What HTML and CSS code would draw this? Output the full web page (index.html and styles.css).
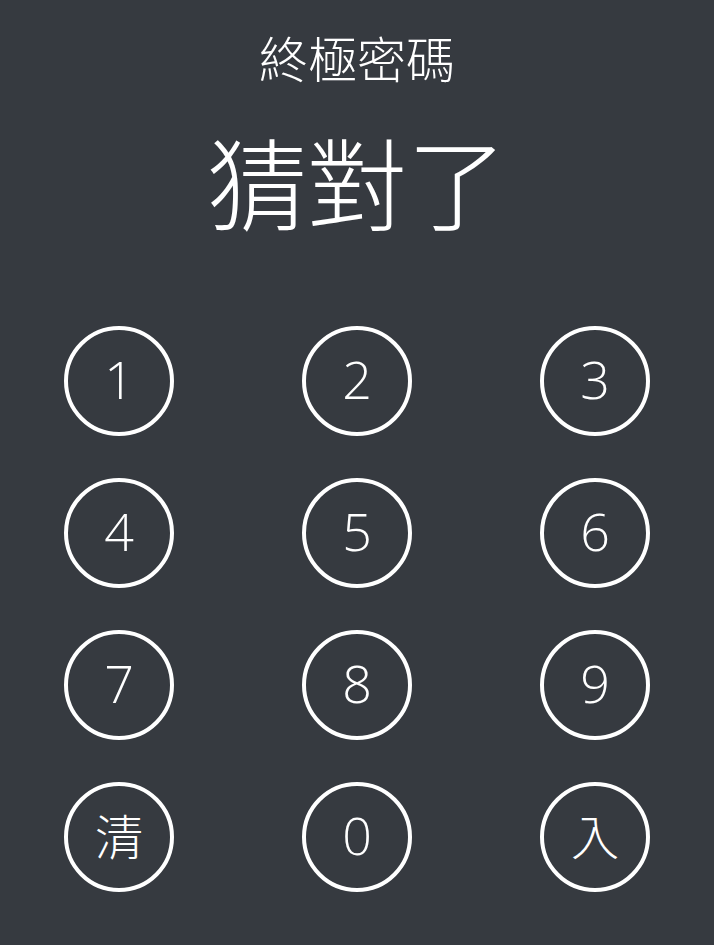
FILE: index.html
```html
<!DOCTYPE html>
<html lang="zh-Hant">
<head>
<meta charset="utf-8">
<title>終極密碼</title>
<link rel="stylesheet" href="styles.css">
</head>
<body>
<main class="app">
  <h1 class="title">終極密碼</h1>
  <div class="result">猜對了</div>
  <div class="keypad">
    <div class="cell"><button class="key">1</button></div>
    <div class="cell"><button class="key">2</button></div>
    <div class="cell"><button class="key">3</button></div>
    <div class="cell"><button class="key">4</button></div>
    <div class="cell"><button class="key">5</button></div>
    <div class="cell"><button class="key">6</button></div>
    <div class="cell"><button class="key">7</button></div>
    <div class="cell"><button class="key">8</button></div>
    <div class="cell"><button class="key">9</button></div>
    <div class="cell"><button class="key key-cjk">清</button></div>
    <div class="cell"><button class="key">0</button></div>
    <div class="cell"><button class="key key-cjk">入</button></div>
  </div>
</main>
</body>
</html>
```

FILE: styles.css
```css
html, body {
  margin: 0;
  padding: 0;
  background: #363a40;
}
body {
  font-family: "Noto Sans CJK TC", "Noto Sans", sans-serif;
  color: #ffffff;
}
.app {
  width: 714px;
  height: 945px;
  display: flex;
  flex-direction: column;
  align-items: center;
}
.title {
  margin: 28px 0 0;
  font-size: 49px;
  line-height: 58px;
  font-weight: 300;
}
.result {
  margin-top: 34px;
  font-size: 100px;
  line-height: 120px;
  font-weight: 300;
}
.keypad {
  margin-top: 65px;
  width: 714px;
  display: grid;
  grid-template-columns: repeat(3, 1fr);
  grid-auto-rows: 152px;
}
.cell {
  display: flex;
  align-items: center;
  justify-content: center;
}
.key {
  width: 110px;
  height: 110px;
  box-sizing: border-box;
  border: 4px solid #ffffff;
  border-radius: 50%;
  background: transparent;
  color: #ffffff;
  font-family: "Open Sans", "Noto Sans CJK TC", sans-serif;
  font-size: 52px;
  font-weight: 300;
  line-height: 1;
  padding: 0 0 4px;
  display: flex;
  align-items: center;
  justify-content: center;
}
.key-cjk {
  font-family: "Noto Sans CJK TC", sans-serif;
  font-size: 48px;
  font-weight: 300;
  padding-bottom: 6px;
}
```
